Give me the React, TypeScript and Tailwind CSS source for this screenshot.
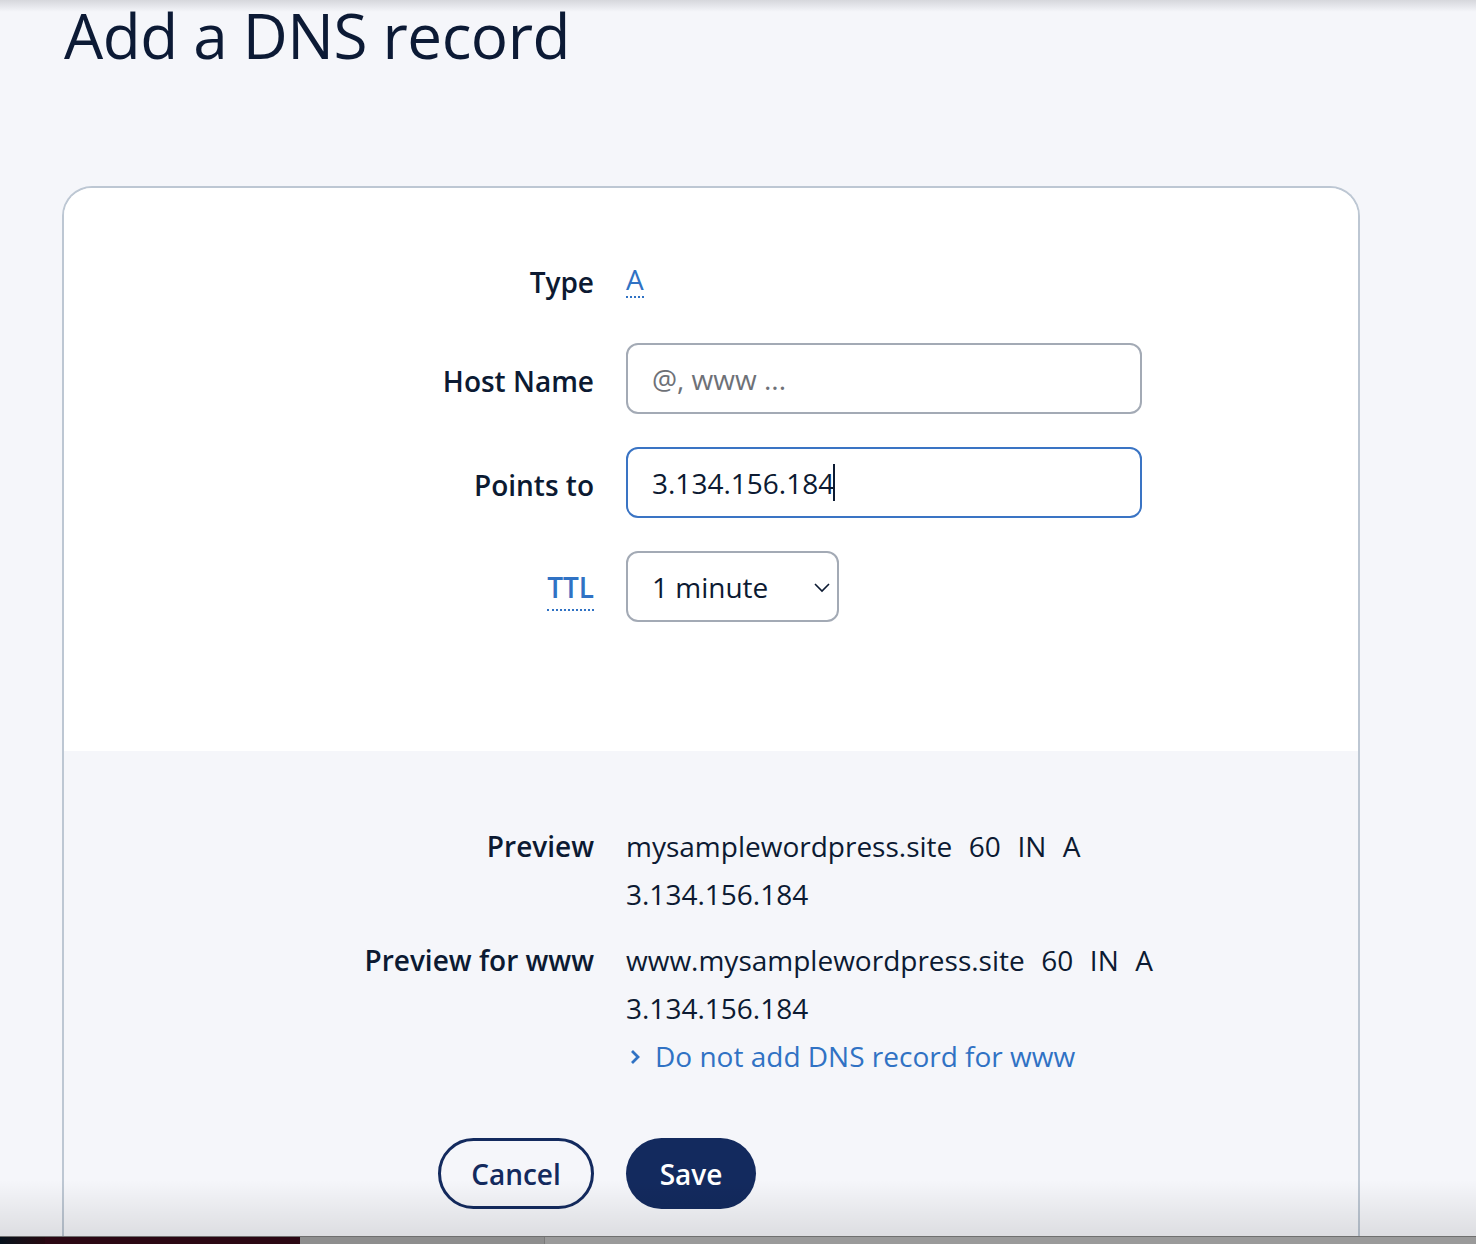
import React from "react";

const font = { fontFamily: '"Open Sans", "Noto Sans", sans-serif' };

function Label({ children, shift = false }: { children: React.ReactNode; shift?: boolean }) {
  return (
    <div
      className={
        shift
          ? "w-[530px] shrink-0 pt-[5px] text-right text-[28px] font-semibold text-[#0c1a32]"
          : "w-[530px] shrink-0 text-right text-[28px] font-semibold text-[#0c1a32]"
      }
    >
      {children}
    </div>
  );
}

export default function App() {
  return (
    <div
      className="relative h-[1244px] w-full overflow-hidden bg-[#f5f6fa] text-[#0c1a32]"
      style={font}
    >
      {/* top shade */}
      <div className="pointer-events-none absolute inset-x-0 top-0 h-[12px] bg-gradient-to-b from-[#d6d7dc] to-[#f5f6fa]/0" />

      <h1 className="ml-[64px] pt-[1px] text-[62px] font-normal leading-[68px] tracking-[-0.5px] text-[#0c1a35]">
        Add a DNS record
      </h1>

      <div className="ml-[62px] mt-[117px] w-[1298px] rounded-t-[30px] border-2 border-b-0 border-[#bdc7d3]">
        {/* white form part */}
        <div className="rounded-t-[28px] bg-white pb-[129px] pt-[58px]">
          <div className="flex h-[71px] items-center gap-[32px]">
            <Label>Type</Label>
            <span className="border-b-2 border-dotted border-[#3072c4] pb-[3px] text-[28px] leading-none text-[#3072c4]">
              A
            </span>
          </div>

          <div className="mt-[26px] flex items-center gap-[32px]">
            <Label shift>Host Name</Label>
            <div className="flex h-[71px] w-[516px] items-center rounded-[12px] border-2 border-[#a3aab5] pl-[24px] text-[28px] text-[#6e7177]">
              @, www ...
            </div>
          </div>

          <div className="mt-[33px] flex items-center gap-[32px]">
            <Label shift>Points to</Label>
            <div className="flex h-[71px] w-[516px] items-center rounded-[12px] border-2 border-[#3a74c4] pl-[24px] text-[28px] text-[#0c1a32]">
              <span>3.134.156.184</span>
              <span className="ml-[-1px] h-[37px] w-[2px] bg-[#0c1a32]" />
            </div>
          </div>

          <div className="mt-[33px] flex items-baseline gap-[32px]">
            <div className="flex w-[530px] shrink-0 justify-end pt-[2px]">
              <span className="border-b-2 border-dotted border-[#3072c4] pb-[8px] text-[28px] font-semibold leading-none text-[#3072c4]">
                TTL
              </span>
            </div>
            <div className="flex h-[71px] w-[213px] items-center justify-between rounded-[12px] border-2 border-[#a3aab5] pl-[24px] pr-[6px] text-[28px] text-[#0c1a32]">
              <span>1 minute</span>
              <svg width="18" height="12" viewBox="0 0 18 12" fill="none">
                <path d="M2 3l7 7 7-7" stroke="#0c1a32" strokeWidth="1.6" />
              </svg>
            </div>
          </div>
        </div>

        {/* grey preview part */}
        <div className="bg-[#f5f6fa] pb-[60px] pt-[71px] text-[28px] leading-[48px]">
          <div className="flex gap-[32px]">
            <Label>Preview</Label>
            <div>
              <div className="whitespace-pre [word-spacing:1px]">mysamplewordpress.site  60  IN  A</div>
              <div>3.134.156.184</div>
            </div>
          </div>
          <div className="mt-[18px] flex gap-[32px]">
            <Label>Preview for www</Label>
            <div>
              <div className="whitespace-pre [word-spacing:1px]">www.mysamplewordpress.site  60  IN  A</div>
              <div>3.134.156.184</div>
              <div className="flex items-center text-[#3072c4]">
                <svg width="12" height="18" viewBox="0 0 12 18" fill="none" className="ml-[3px] mr-[14px] mt-[2px]">
                  <path d="M3 3l6 6-6 6" stroke="#3072c4" strokeWidth="2.8" />
                </svg>
                <span>Do not add DNS record for www</span>
              </div>
            </div>
          </div>

          <div className="mt-[58px] flex items-center gap-[32px]">
            <div className="flex w-[530px] shrink-0 justify-end">
              <button className="flex h-[71px] w-[156px] items-center justify-center rounded-full border-[3px] border-[#132a5e] text-[28px] font-semibold text-[#132a5e]">
                Cancel
              </button>
            </div>
            <button className="flex h-[71px] w-[130px] items-center justify-center rounded-full bg-[#132a5e] text-[28px] font-semibold text-white">
              Save
            </button>
          </div>
        </div>
      </div>

      {/* bottom shade and bar */}
      <div className="pointer-events-none absolute inset-x-0 bottom-[8px] h-[56px] bg-gradient-to-b from-black/0 to-black/10" />
      <div className="absolute inset-x-0 bottom-0 flex h-[8px] border-t border-[#6f6f6f]">
        <div className="w-[45px] bg-gradient-to-r from-[#06111c] to-[#250810]" />
        <div className="w-[255px] bg-[#2b0713]" />
        <div className="w-[245px] border-r border-[#7a7a7a] bg-[#8e8e8e]" />
        <div className="flex-1 bg-[#9a9a9a]" />
      </div>
    </div>
  );
}
